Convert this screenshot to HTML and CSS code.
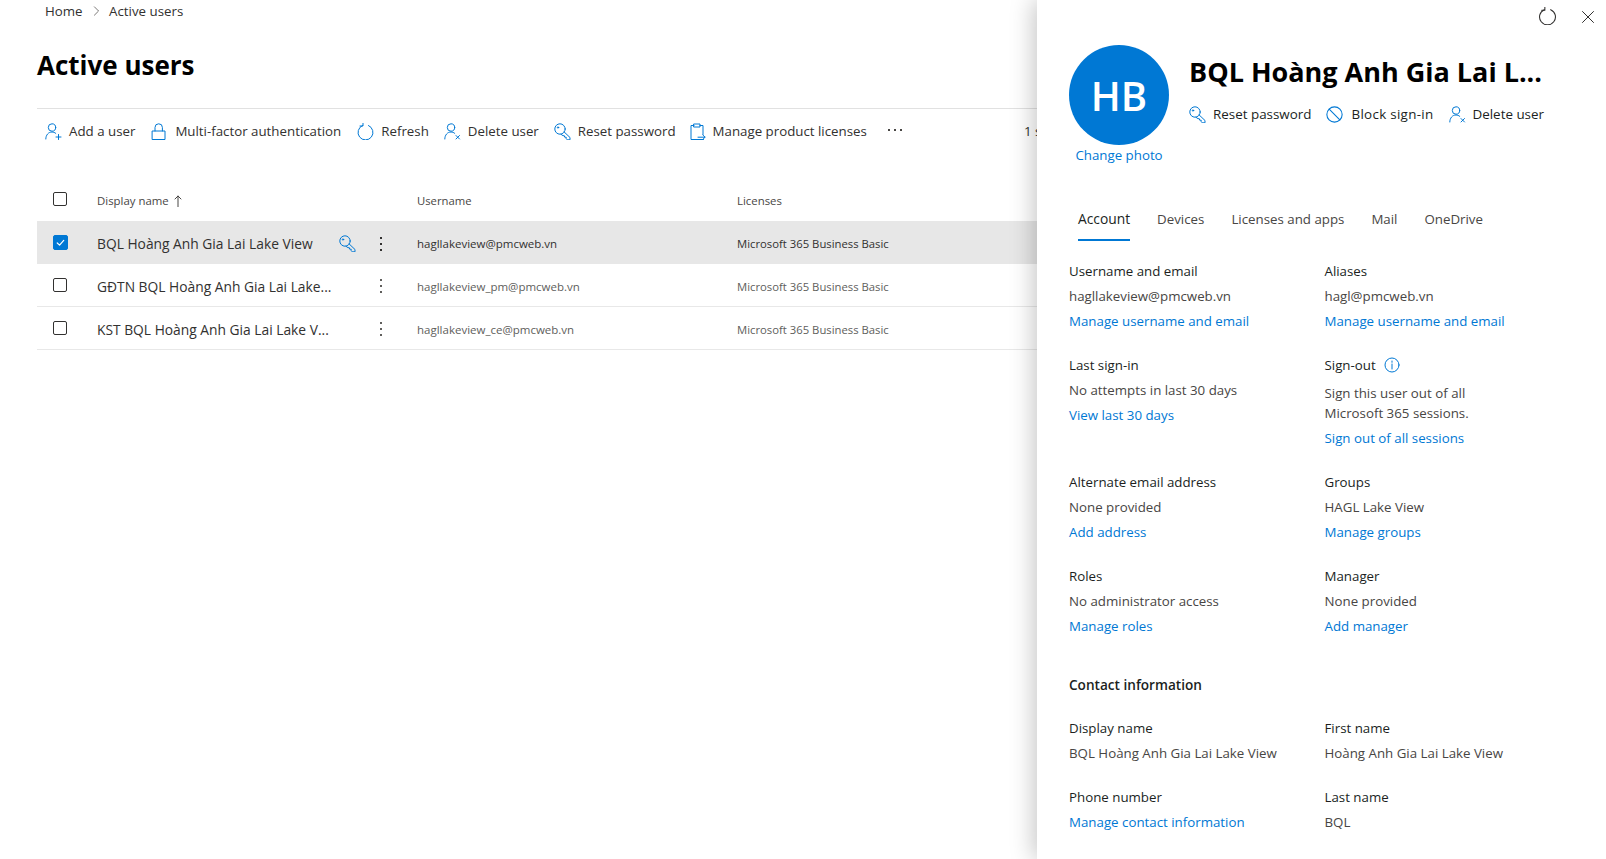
FILE: index.html
```html
<!DOCTYPE html>
<html lang="en">
<head>
  <meta charset="UTF-8">
  <title>Active users</title>
  <link rel="stylesheet" href="styles.css">
</head>
<body>
  <svg class="defs" width="0" height="0">
    <defs>
      <g id="i-add"><circle cx="7" cy="4.500" r="3.700"/><path d="M.8 16c0-4 2.600-7 6.200-7 1.500 0 2.800.5 3.800 1.400"/><path d="M13.500 11.500v5M11 14h5"/></g>
      <g id="i-del"><circle cx="7" cy="4.500" r="3.700"/><path d="M.8 16c0-4 2.600-7 6.200-7 1.500 0 2.800.5 3.800 1.400"/><path d="M12 12.500l3.500 3.500M15.500 12.500l-3.500 3.500"/></g>
      <g id="i-lock"><path d="M4 8V4.500a3.700 3.700 0 0 1 7.400 0V8"/><rect x="1.500" y="8" width="12.500" height="8.500"/></g>
      <g id="i-refresh"><path d="M5 2.500a7.500 7.500 0 1 0 6 0"/><path d="M5.500 0v3H2.500"/></g>
      <g id="i-key"><circle cx="6" cy="6" r="5.200"/><circle cx="4" cy="4.500" r=".7"/><path d="M10 8.800l6 5.700v2.300h-2.800l-1-1.100v-1.500h-1.500l-.4-1.500H9l-2-1.400"/></g>
      <g id="i-clip"><path d="M5 2.500H2v14h12.500"/><path d="M11 2.500h3v9"/><path d="M5 1h6v3H5z"/><path d="M9 14.200h7M13.800 12l2.300 2.200-2.300 2.200"/></g>
      <g id="i-block"><circle cx="8" cy="8" r="7.200"/><path d="M3 3l10 10"/></g>
    </defs>
  </svg>

  <div class="page">
    <main class="main">
      <div class="crumbs"><span>Home</span><svg class="crumb-sep" viewBox="0 0 8 12"><path d="M1.500 1l5 5-5 5"/></svg><span>Active users</span></div>
      <h1 class="page-title">Active users</h1>

      <div class="toolbar">
        <div class="tool"><svg class="ic" viewBox="0 0 17 17"><use href="#i-add"/></svg>Add a user</div>
        <div class="tool"><svg class="ic" viewBox="0 0 17 17"><use href="#i-lock"/></svg>Multi-factor authentication</div>
        <div class="tool"><svg class="ic" viewBox="0 0 16 17"><use href="#i-refresh"/></svg>Refresh</div>
        <div class="tool"><svg class="ic" viewBox="0 0 17 17"><use href="#i-del"/></svg>Delete user</div>
        <div class="tool"><svg class="ic" viewBox="0 0 17 17"><use href="#i-key"/></svg>Reset password</div>
        <div class="tool"><svg class="ic" viewBox="0 0 17 17"><use href="#i-clip"/></svg>Manage product licenses</div>
        <div class="tool-more"><i></i><i></i><i></i></div>
        <div class="tool-count">1 selected</div>
      </div>

      <div class="row head">
        <div class="cell-check"><span class="check"></span></div>
        <div class="cell-name">Display name <svg class="sort" viewBox="0 0 8 12"><path d="M4 12V1M1 4l3-3 3 3"/></svg></div>
        <div class="cell-user">Username</div>
        <div class="cell-lic">Licenses</div>
      </div>
      <div class="row item selected">
        <div class="cell-check"><span class="check on"><svg viewBox="0 0 14 14"><path d="M3.500 7.500l2.500 2.300 4.500-5"/></svg></span></div>
        <div class="cell-name"><span class="name-text">BQL Hoàng Anh Gia Lai Lake View</span><svg class="ic key" viewBox="0 0 17 17"><use href="#i-key"/></svg></div>
        <div class="kebab"><i></i><i></i><i></i></div>
        <div class="cell-user">hagllakeview@pmcweb.vn</div>
        <div class="cell-lic">Microsoft 365 Business Basic</div>
      </div>
      <div class="row item">
        <div class="cell-check"><span class="check"></span></div>
        <div class="cell-name"><span class="name-text">GĐTN BQL Hoàng Anh Gia Lai Lake...</span></div>
        <div class="kebab"><i></i><i></i><i></i></div>
        <div class="cell-user">hagllakeview_pm@pmcweb.vn</div>
        <div class="cell-lic">Microsoft 365 Business Basic</div>
      </div>
      <div class="row item">
        <div class="cell-check"><span class="check"></span></div>
        <div class="cell-name"><span class="name-text">KST BQL Hoàng Anh Gia Lai Lake V...</span></div>
        <div class="kebab"><i></i><i></i><i></i></div>
        <div class="cell-user">hagllakeview_ce@pmcweb.vn</div>
        <div class="cell-lic">Microsoft 365 Business Basic</div>
      </div>
    </main>

    <aside class="panel">
      <div class="panel-top">
        <svg class="top-refresh" viewBox="0 0 16 17"><use href="#i-refresh"/></svg>
        <svg class="top-close" viewBox="0 0 14 14"><path d="M1.500 1.500l11 11M12.500 1.500l-11 11"/></svg>
      </div>

      <div class="user-head">
        <div class="avatar-col">
          <div class="avatar">HB</div>
          <a class="link">Change photo</a>
        </div>
        <div class="user-info">
          <h2 class="user-name">BQL Hoàng Anh Gia Lai L...</h2>
          <div class="user-actions">
            <div class="tool"><svg class="ic" viewBox="0 0 17 17"><use href="#i-key"/></svg>Reset password</div>
            <div class="tool tool-wide"><svg class="ic" viewBox="0 0 16 16"><use href="#i-block"/></svg>Block sign-in</div>
            <div class="tool"><svg class="ic" viewBox="0 0 17 17"><use href="#i-del"/></svg>Delete user</div>
          </div>
        </div>
      </div>

      <div class="tabs">
        <div class="tab active">Account</div>
        <div class="tab">Devices</div>
        <div class="tab">Licenses and apps</div>
        <div class="tab">Mail</div>
        <div class="tab">OneDrive</div>
      </div>

      <div class="fields">
        <div class="field"><div class="label">Username and email</div><div class="value">hagllakeview@pmcweb.vn</div><a class="link">Manage username and email</a></div>
        <div class="field"><div class="label">Aliases</div><div class="value">hagl@pmcweb.vn</div><a class="link">Manage username and email</a></div>

        <div class="field"><div class="label">Last sign-in</div><div class="value">No attempts in last 30 days</div><a class="link">View last 30 days</a></div>
        <div class="field">
          <div class="label">Sign-out <svg class="info" viewBox="0 0 16 16"><circle cx="8" cy="8" r="7"/><path d="M8 7v5M8 4v1.300"/></svg></div>
          <div class="value wide">Sign this user out of all<br>Microsoft 365 sessions.</div>
          <a class="link">Sign out of all sessions</a>
        </div>

        <div class="field"><div class="label">Alternate email address</div><div class="value">None provided</div><a class="link">Add address</a></div>
        <div class="field"><div class="label">Groups</div><div class="value">HAGL Lake View</div><a class="link">Manage groups</a></div>

        <div class="field"><div class="label">Roles</div><div class="value">No administrator access</div><a class="link">Manage roles</a></div>
        <div class="field"><div class="label">Manager</div><div class="value">None provided</div><a class="link">Add manager</a></div>
      </div>

      <h3 class="section">Contact information</h3>

      <div class="fields">
        <div class="field"><div class="label">Display name</div><div class="value">BQL Hoàng Anh Gia Lai Lake View</div></div>
        <div class="field"><div class="label">First name</div><div class="value">Hoàng Anh Gia Lai Lake View</div></div>
        <div class="field"><div class="label">Phone number</div><a class="link">Manage contact information</a></div>
        <div class="field"><div class="label">Last name</div><div class="value">BQL</div></div>
      </div>
    </aside>
  </div>
</body>
</html>
```

FILE: styles.css
```css
* {
  box-sizing: border-box;
}
html, body {
  margin: 0;
  height: 859px;
  overflow: hidden;
}
body {
  font-family: "Open Sans", "Noto Sans", sans-serif;
  font-size: 13.3px;
  color: #323130;
  background: white;
}
.defs {
  position: absolute;
}
.page {
  display: flex;
  height: 859px;
}
svg {
  fill: none;
  stroke-linecap: round;
  stroke-linejoin: round;
}
.ic {
  width: 17px;
  height: 17px;
  flex: none;
  stroke: #0078d4;
  stroke-width: 1;
}

/* left side */
.main {
  flex: 0 0 1037px;
  padding-left: 37px;
  overflow: hidden;
  white-space: nowrap;
}
.crumbs {
  display: flex;
  align-items: center;
  height: 22px;
  padding-left: 8px;
  color: #323130;
}
.crumb-sep {
  width: 7px;
  height: 10px;
  margin: 0 9.500px 0 10px;
  stroke: #605e5c;
  stroke-width: 1;
}
.page-title {
  margin: 26px 0 0;
  font-size: 26px;
  line-height: 34px;
  font-weight: 700;
  color: #000;
}
.toolbar {
  display: flex;
  align-items: center;
  height: 45px;
  margin-top: 26px;
  padding-left: 8px;
  border-top: 1px solid #e1e1e1;
  font-size: 13.3px;
}
.tool {
  display: flex;
  align-items: center;
  gap: 7px;
  margin-right: 15px;
  color: #323130;
}
.toolbar .tool:nth-child(1),
.toolbar .tool:nth-child(2) {
  margin-right: 16px;
}
.toolbar .tool:nth-child(5) {
  margin-right: 13px;
}
.tool-more {
  display: flex;
  gap: 4px;
  margin-left: 6px;
  padding-bottom: 3px;
}
.tool-more i {
  display: block;
  width: 2px;
  height: 2px;
  background: #484644;
}
.tool-count {
  margin-left: auto;
  width: 13px;
  min-width: 0;
}
.row {
  display: flex;
  align-items: center;
  width: 1000px;
}
.head {
  height: 43px;
  margin-top: 25px;
  padding-top: 2px;
  font-size: 11.4px;
  color: #484644;
}
.item {
  height: 43px;
  padding-top: 2px;
  border-bottom: 1px solid #e8e8e8;
  font-size: 11.3px;
  color: #605e5c;
}
.item.selected {
  background: #e7e7e7;
  border-bottom: 0;
  color: #323130;
}
.cell-check {
  flex: 0 0 60px;
  padding-left: 16px;
}
.check {
  display: block;
  width: 14px;
  height: 14px;
  margin-bottom: 3px;
  border: 1px solid #323130;
  border-radius: 2px;
}
.check.on {
  width: 15px;
  height: 15px;
  background: #0078d4;
  border-color: #0078d4;
  margin-bottom: 2px;
}
.check svg {
  display: block;
  width: 13px;
  height: 13px;
  stroke: white;
  stroke-width: 1.300;
}
.cell-name {
  display: flex;
  align-items: center;
  flex: 0 0 264px;
  gap: 5px;
}
.head .cell-name {
  flex-basis: 320px;
}
.name-text {
  font-size: 13.8px;
  color: #323130;
}
.key {
  margin-left: 21px;
}
.sort {
  width: 8px;
  height: 12px;
  stroke: #484644;
  stroke-width: 1;
}
.kebab {
  flex: 0 0 39px;
  display: flex;
  flex-direction: column;
  align-items: center;
  gap: 4px;
  margin-right: 17px;
}
.kebab i {
  display: block;
  width: 2px;
  height: 2px;
  background: #605e5c;
}
.selected .kebab i {
  background: #323130;
}
.cell-user {
  flex: 0 0 320px;
  font-size: 11.500px;
}
.head .cell-user {
  font-size: 11.3px;
}
.cell-lic {
  flex: 1;
}

/* flyout */
.panel {
  flex: 1;
  position: relative;
  padding-left: 32px;
  background: white;
  box-shadow: -4px 0 22px rgba(0,0,0,0.22);
  white-space: nowrap;
}
.panel-top {
  position: absolute;
  top: 7px;
  right: 0;
}
.top-refresh {
  position: absolute;
  top: 0;
  right: 50px;
  width: 17px;
  height: 18px;
  stroke: #323130;
  stroke-width: 1;
}
.top-close {
  position: absolute;
  top: 3px;
  right: 11px;
  width: 14px;
  height: 14px;
  stroke: #323130;
  stroke-width: 1;
}
.user-head {
  display: flex;
  padding-top: 45px;
}
.avatar-col {
  display: flex;
  flex-direction: column;
  align-items: center;
  width: 100px;
}
.avatar {
  display: flex;
  align-items: center;
  justify-content: center;
  width: 100px;
  height: 100px;
  border-radius: 50%;
  background: #0078d4;
  color: white;
  font-size: 40px;
  font-weight: 600;
}
.avatar-col .link {
  margin-top: 0;
}
.user-info {
  margin-left: 20px;
}
.user-name {
  margin: 9px 0 0;
  font-size: 27px;
  line-height: 36px;
  font-weight: 700;
  color: #000;
}
.user-actions {
  display: flex;
  margin-top: 15px;
  font-size: 13.4px;
}
.user-actions .tool {
  color: #201f1e;
  margin-right: 15px;
}
.user-actions .tool-wide {
  gap: 8px;
  letter-spacing: 0.3px;
}
.tabs {
  display: flex;
  gap: 27px;
  height: 46px;
  margin-top: 36px;
  padding-left: 9px;
}
.tab {
  padding-top: 8px;
  line-height: 20px;
  color: #484644;
}
.tab.active {
  color: #201f1e;
  font-size: 13.8px;
  font-weight: 500;
  border-bottom: 2px solid #0078d4;
  height: 40px;
}
.fields {
  display: grid;
  grid-template-columns: 255.500px 1fr;
  margin-top: 14px;
}
.label {
  display: flex;
  align-items: center;
  gap: 8px;
  line-height: 20px;
  color: #201f1e;
  font-weight: 500;
}
.value {
  margin-top: 5px;
  line-height: 20px;
  color: #484644;
}
.value.wide {
  margin-top: 8px;
}
.link {
  display: block;
  margin-top: 5px;
  line-height: 20px;
  color: #0078d4;
}
.field {
  padding-bottom: 24px;
}
.info {
  width: 16px;
  height: 16px;
  stroke: #0078d4;
  stroke-width: 1;
}
.section {
  margin: 15px 0 0;
  font-size: 13.6px;
  line-height: 20px;
  font-weight: 600;
  color: #201f1e;
}
.section + .fields {
  margin-top: 23px;
}
```
